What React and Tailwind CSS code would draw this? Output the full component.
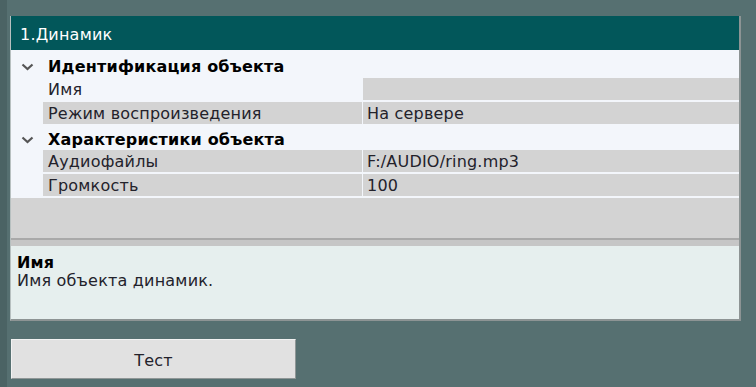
const groups = [
  {
    title: 'Идентификация объекта',
    first: true,
    rows: [
      { name: 'Имя', value: '', selected: true },
      { name: 'Режим воспроизведения', value: 'На сервере' },
    ],
  },
  {
    title: 'Характеристики объекта',
    rows: [
      { name: 'Аудиофайлы', value: 'F:/AUDIO/ring.mp3' },
      { name: 'Громкость', value: '100' },
    ],
  },
]

function Chevron() {
  return (
    <svg width="13" height="8" viewBox="0 0 13 8" className="text-[#555]">
      <path d="M1.5 1.5 L6.5 6 L11.5 1.5" fill="none" stroke="currentColor" strokeWidth="2.2" />
    </svg>
  )
}

export default function App() {
  return (
    <div className="min-h-[387px] bg-[#567071] flex text-[16px] tracking-[0.2px] text-[#23222b]"
      style={{ fontFamily: '"DejaVu Sans", Verdana, sans-serif' }}>
      <div className="w-[7px] bg-[#4b6364]" />
      <div className="pl-[3px] pt-4">
        <div className="w-[731px] border-l border-[#b7c0c0] border-r-2 border-b-2 border-r-[#8d9494] border-b-[#8d9494]">
          <div className="h-[34px] bg-[#02575a] text-white flex items-center pl-[9px] pt-[3px]">1.Динамик</div>

          <div className="bg-[#f3f6fb]">
            {groups.map(g => (
              <div key={g.title}>
                <div className={`flex items-center ${g.first ? 'h-[28px] pt-[5px]' : 'h-[24px] pt-[3px]'}`}>
                  <div className="w-[32px] flex justify-center"><Chevron /></div>
                  <div className="pl-[5px] font-bold text-black">{g.title}</div>
                </div>
                {g.rows.map(r => (
                  <div key={r.name} className="flex h-[24px] pb-[2px]">
                    <div className="w-[32px]" />
                    <div className={`w-[319px] pl-[5px] pt-[2px] flex items-center ${r.selected ? '' : 'bg-[#d3d3d3]'}`}>{r.name}</div>
                    <div className="w-px" />
                    <div className="flex-1 bg-[#d3d3d3] pl-[4px] pt-[2px] flex items-center">{r.value}</div>
                  </div>
                ))}
              </div>
            ))}
            <div className="h-[40px] bg-[#d3d3d3]" />
          </div>

          <div className="h-[8px] bg-[#c6c6c6] border-t-2 border-[#a9a9a9]" />

          <div className="h-[73px] bg-[#e6efee] px-[6px] pt-[8px] leading-[18px]">
            <div className="font-bold text-black">Имя</div>
            <div>Имя объекта динамик.</div>
          </div>
        </div>

        <button className="mt-[18px] ml-px w-[285px] h-[40px] pt-[3px] bg-[#e1e1e1] border border-t-[#f2f2f2] border-l-[#f2f2f2] border-r-[#8f9696] border-b-[#8f9696] text-[#23222b]">
          Тест
        </button>
      </div>
    </div>
  )
}
